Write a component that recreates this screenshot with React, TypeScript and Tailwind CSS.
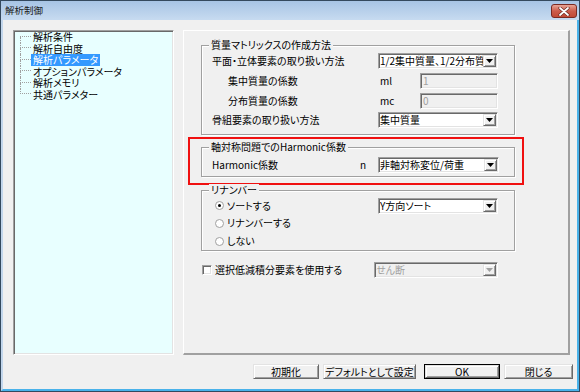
import React from 'react';

const FONT = "font-['Noto_Sans_CJK_JP',sans-serif] [font-feature-settings:'palt']";

const SUNKEN =
  'border border-t-[#a0a0a0] border-l-[#a0a0a0] border-r-white border-b-white shadow-[inset_1px_1px_0_#696969,inset_-1px_-1px_0_#e3e3e3]';

const RAISED =
  'border border-t-[#e3e3e3] border-l-[#e3e3e3] border-r-[#696969] border-b-[#696969] bg-[#f0f0f0] shadow-[inset_1px_1px_0_#fff,inset_-1px_-1px_0_#a0a0a0]';

const treeItems = [
  '解析条件',
  '解析自由度',
  '解析パラメータ',
  'オプションパラメータ',
  '解析メモリ',
  '共通パラメター',
];

const Combo = ({ value, w, disabled }: { value: string; w: string; disabled?: boolean }) => (
  <div
    className={`${w} flex h-[16px] shrink-0 p-px ${SUNKEN} ${
      disabled ? 'bg-[#f0f0f0] text-[#a0a0a0]' : 'bg-white'
    }`}
  >
    <span className="min-w-0 flex-1 overflow-x-clip whitespace-nowrap leading-[12px]">{value}</span>
    <span className={`flex w-[13px] shrink-0 items-center justify-center ${RAISED}`}>
      <svg width="7" height="4" viewBox="0 0 7 4">
        <path d="M0 0h7L3.5 4z" fill={disabled ? '#a0a0a0' : '#000'} />
      </svg>
    </span>
  </div>
);

const Field = ({ value }: { value: string }) => (
  <div className={`ml-auto h-[16px] w-[78px] bg-[#f0f0f0] pl-[2px] leading-[14px] text-[#a0a0a0] ${SUNKEN}`}>
    {value}
  </div>
);

const Radio = ({ checked }: { checked?: boolean }) => (
  <svg width="9" height="9" viewBox="0 0 9 9" className="shrink-0">
    <circle cx="4.5" cy="4.5" r="4" fill="#fff" stroke="#a0a0a0" />
    {checked && <circle cx="4.5" cy="4.5" r="1.5" fill="#000" />}
  </svg>
);

const Group = ({ title, children, className = '' }: { title: string; children: React.ReactNode; className?: string }) => (
  <div className={`w-[314px] border border-[#a0a0a0] shadow-[inset_1px_1px_0_#fff,1px_1px_0_#fff] ${className}`}>
    <div className="-mt-[7px] ml-[7px] w-fit bg-[#f0f0f0] px-[2px] leading-[12px]">{title}</div>
    {children}
  </div>
);

const Button = ({ label, w, primary }: { label: string; w: string; primary?: boolean }) =>
  primary ? (
    <div className={`${w} h-[15px] border border-black`}>
      <button type="button" className={`flex h-full w-full items-center justify-center leading-[12px] ${RAISED}`}>
        {label}
      </button>
    </div>
  ) : (
    <button type="button" className={`${w} flex h-[15px] items-center justify-center leading-[12px] ${RAISED}`}>
      {label}
    </button>
  );

export default function App() {
  return (
    <div
      className={`${FONT} flex h-[392px] w-[580px] flex-col overflow-hidden border border-[#34495e] text-[10px] leading-[12px] text-black`}
    >
      {/* title bar */}
      <div className="flex h-[19px] items-start bg-linear-to-b from-[#a7c4e5] to-[#c7dbf0] pl-[4px] pr-[2px]">
        <span className="mt-[4px] text-[9.5px] leading-[11px] text-[#1b1b1b]">解析制御</span>
        <div className="ml-auto mt-[3px] flex h-[14px] w-[26px] items-center justify-center rounded-[3px] border border-[#7a2a22] bg-linear-to-b from-[#e8a597] via-[#cc5c4b] to-[#c24a35]">
          <svg width="12" height="9" viewBox="0 0 12 9">
            <path d="M2 1l8 7M10 1L2 8" stroke="#6b2a22" strokeWidth="3.2" strokeLinecap="round" />
            <path d="M2 1l8 7M10 1L2 8" stroke="#fff" strokeWidth="1.8" strokeLinecap="round" />
          </svg>
        </div>
      </div>

      {/* client */}
      <div className="flex flex-1 flex-col border-b-2 border-l-2 border-r-2 border-b-[#49b2ea] border-l-[#c2d6ec] border-r-[#49b2ea] bg-[#f0f0f0] pl-[10px] pr-[4px] pt-[10px]">
        <div className="flex h-[325px]">
          {/* tree */}
          <div className={`h-full w-[161px] bg-[#e8ffff] pl-[6px] ${SUNKEN}`}>
            {treeItems.map((item, i) => {
              const first = i === 0;
              const last = i === treeItems.length - 1;
              const selected = i === 2;
              return (
                <div key={item} className="flex h-[11.5px]">
                  <div className="flex w-[11px] shrink-0 flex-col">
                    <div
                      className={`h-1/2 border-b border-dotted border-[#a0a0a0] ${first ? '' : 'border-l'}`}
                    />
                    <div className={`flex-1 border-dotted border-[#a0a0a0] ${last ? '' : 'border-l'}`} />
                  </div>
                  <span
                    className={`px-[2px] leading-[11.5px] whitespace-nowrap ${
                      selected ? 'bg-[#3399ff] text-white' : ''
                    }`}
                  >
                    {item}
                  </span>
                </div>
              );
            })}
          </div>

          {/* settings panel */}
          <div className="ml-[9px] flex h-full w-[387px] flex-col border-b-2 border-l border-r-2 border-t border-b-[#a0a0a0] border-l-white border-r-[#a0a0a0] border-t-white pl-[17px] pt-[14px]">
            <Group title="質量マトリックスの作成方法">
              <div className="pb-[6px] pl-[10px] pr-[16px] pt-[2px]">
                <div className="flex h-[16px] items-center">
                  <span className="flex-1">平面・立体要素の取り扱い方法</span>
                  <Combo w="w-[120px]" value="1/2集中質量、1/2分布質量" />
                </div>
                <div className="mt-[4px] flex h-[16px] items-center">
                  <span className="flex-1 pl-[16px]">集中質量の係数</span>
                  <div className="flex w-[120px] items-center">
                    <span className="pl-[2px]">ml</span>
                    <Field value="1" />
                  </div>
                </div>
                <div className="mt-[4px] flex h-[16px] items-center">
                  <span className="flex-1 pl-[16px]">分布質量の係数</span>
                  <div className="flex w-[120px] items-center">
                    <span className="pl-[2px]">mc</span>
                    <Field value="0" />
                  </div>
                </div>
                <div className="mt-[3px] flex h-[16px] items-center">
                  <span className="flex-1">骨組要素の取り扱い方法</span>
                  <Combo w="w-[120px]" value="集中質量" />
                </div>
              </div>
            </Group>

            <div className="-ml-[13px] mt-[2px] w-[336px] border-2 border-[#f01010] pb-[6px] pl-[11px] pt-[8px]">
              <Group title="軸対称問題でのHarmonic係数">
                <div className="mt-[4px] flex h-[16px] items-center pl-[10px] pr-[15px]">
                  <span className="flex-1">Harmonic係数</span>
                  <span className="w-[18px]">n</span>
                  <Combo w="w-[121px]" value="非軸対称変位/荷重" />
                </div>
                <div className="h-[3px]" />
              </Group>
            </div>

            <Group title="リナンバー" className="mt-[5px]">
              <div className="pl-[13px] pr-[16px] pt-[1px]">
                <div className="flex h-[17px] items-center">
                  <Radio checked />
                  <span className="ml-[3px] flex-1">ソートする</span>
                  <Combo w="w-[120px]" value="Y方向ソート" />
                </div>
                <div className="flex h-[18px] items-center">
                  <Radio />
                  <span className="ml-[3px]">リナンバーする</span>
                </div>
                <div className="flex h-[18px] items-center">
                  <Radio />
                  <span className="ml-[3px]">しない</span>
                </div>
              </div>
            </Group>

            <div className="ml-[1px] mt-[11px] flex h-[16px] w-[296px] items-center">
              <div className={`h-[10px] w-[10px] shrink-0 bg-white ${SUNKEN}`} />
              <span className="ml-[3px] flex-1">選択低減積分要素を使用する</span>
              <Combo w="w-[124px]" value="せん断" disabled />
            </div>
          </div>
        </div>

        {/* buttons */}
        <div className="mt-[9px] flex h-[15px] justify-end">
          <Button label="初期化" w="w-[66px]" />
          <div className="ml-[4px]">
            <Button label="デフォルトとして設定" w="w-[93px]" />
          </div>
          <div className="ml-[8px]">
            <Button label="OK" w="w-[76px]" primary />
          </div>
          <div className="ml-[4px]">
            <Button label="閉じる" w="w-[69px]" />
          </div>
        </div>
      </div>
    </div>
  );
}
